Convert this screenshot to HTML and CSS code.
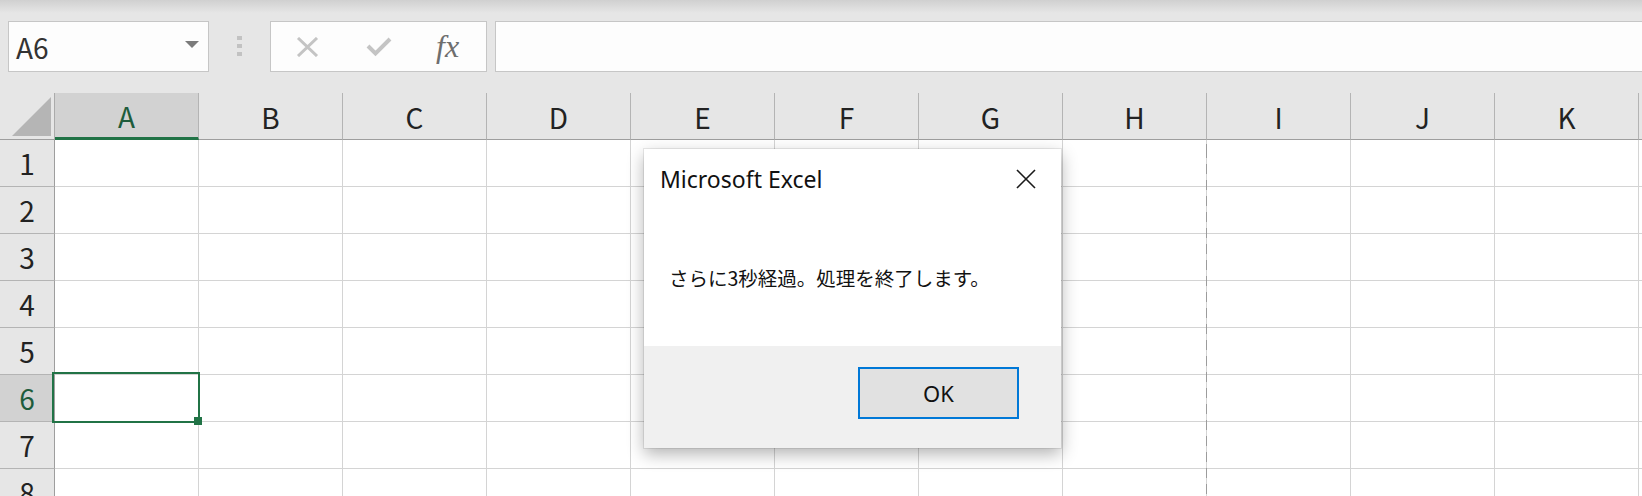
FILE: index.html
```html
<!DOCTYPE html>
<html lang="ja">
<head>
  <meta charset="UTF-8">
  <meta name="viewport" content="width=device-width, initial-scale=1.0">
  <title>Microsoft Excel</title>
  <link rel="stylesheet" href="styles.css">
</head>
<body>
  <div class="formula-bar">
    <div class="name-box">
      <span class="cell-ref">A6</span>
      <span class="drop-arrow"></span>
    </div>
    <div class="grip"><i></i><i></i><i></i></div>
    <div class="fx-buttons">
      <svg class="btn-cancel" width="23" height="20" viewBox="0 0 23 20">
        <path d="M2 1 L21 19 M21 1 L2 19" stroke="#c4c4c4" stroke-width="3" fill="none"/>
      </svg>
      <svg class="btn-enter" width="26" height="21" viewBox="0 0 26 21">
        <path d="M2 10 L9.5 17.5 L24 3" stroke="#c4c4c4" stroke-width="4" fill="none"/>
      </svg>
      <span class="fx">fx</span>
    </div>
    <div class="formula-input"></div>
  </div>

  <div class="sheet">
    <div class="grid" id="grid"></div>
    <div class="page-break"></div>

    <div class="msgbox">
      <div class="msg-body">
        <div class="msg-head">
          <span class="msg-title">Microsoft Excel</span>
          <svg class="msg-close" width="20" height="20" viewBox="0 0 20 20">
            <path d="M1 1 L19 19 M19 1 L1 19" stroke="#1a1a1a" stroke-width="1.6" fill="none"/>
          </svg>
        </div>
        <div class="msg-text">さらに3秒経過。処理を終了します。</div>
      </div>
      <div class="msg-foot">
        <button type="button" class="ok-btn">OK</button>
      </div>
    </div>
  </div>

  <script>
    // columns A..K are labelled, the last one only peeks in at the edge
    var cols = 'ABCDEFGHIJK'.split('');
    var html = '<div class="corner"></div>';

    cols.forEach(function(c, i) {
      html += '<div class="col-head' + (i === 0 ? ' selected' : '') + '">' + c + '</div>';
    });
    html += '<div class="col-head"></div>';

    for (var r = 1; r <= 8; r++) {
      html += '<div class="row-head' + (r === 6 ? ' selected' : '') + '">' + r + '</div>';
      for (var c = 0; c <= cols.length; c++) {
        // A6 is the active cell
        var active = (r === 6 && c === 0) ? ' active' : '';
        html += '<div class="cell' + active + '"></div>';
      }
    }

    document.getElementById('grid').innerHTML = html;
  </script>
</body>
</html>
```

FILE: styles.css
```css
* {
  box-sizing: border-box;
}

body, html {
  margin: 0;
  padding: 0;
  height: 100%;
  overflow: hidden;
  background-color: #e6e6e6;
  font-family: "Noto Sans CJK JP", "Noto Sans", sans-serif;
}

/* formula bar */
.formula-bar {
  height: 93px;
  padding: 21px 0 0 8px;
  display: flex;
  align-items: flex-start;
  background: linear-gradient(#d0d0d0, #e6e6e6 13px);
}

.name-box {
  width: 201px;
  height: 51px;
  padding: 0 9px 0 7px;
  display: flex;
  align-items: center;
  justify-content: space-between;
  background-color: #fdfdfd;
  border: 1px solid #c6c6c6;
}

.cell-ref {
  font-size: 28px;
  line-height: 1;
  color: #333;
}

.drop-arrow {
  width: 0;
  height: 0;
  margin-top: -4px;
  border-left: 7px solid transparent;
  border-right: 7px solid transparent;
  border-top: 7px solid #7b7b7b;
}

.grip {
  margin: 15px 0 0 28px;
  display: flex;
  flex-direction: column;
  gap: 4px;
}

.grip i {
  display: block;
  width: 5px;
  height: 4px;
  background-color: #c2c2c2;
}

.fx-buttons {
  width: 217px;
  height: 51px;
  margin-left: 28px;
  padding-left: 25px;
  display: flex;
  align-items: center;
  background-color: #fdfdfd;
  border: 1px solid #c6c6c6;
}

.btn-enter {
  margin-left: 47px;
}

.fx {
  margin-left: 44px;
  margin-top: -2px;
  font-family: "Liberation Serif", serif;
  font-style: italic;
  font-size: 32px;
  line-height: 1;
  color: #6e6e6e;
}

.formula-input {
  flex: 1;
  height: 51px;
  margin: 0 -2px 0 8px;
  background-color: #fdfdfd;
  border: 1px solid #c6c6c6;
}

/* worksheet */
.sheet {
  position: relative;
  height: calc(100% - 93px);
  overflow: hidden;
}

.grid {
  display: grid;
  grid-template-columns: 55px repeat(12, 144px);
  grid-auto-rows: 47px;
  background-color: #fff;
}

.corner, .col-head, .row-head {
  display: flex;
  align-items: center;
  justify-content: center;
  background-color: #e6e6e6;
  font-size: 28px;
  line-height: 1;
  color: #222;
}

.corner {
  position: relative;
  border-right: 1px solid #ababab;
  border-bottom: 1px solid #9e9e9e;
}

.corner::after {
  content: "";
  position: absolute;
  left: 12px;
  top: 4px;
  width: 39px;
  height: 39px;
  background-color: #b5b5b5;
  clip-path: polygon(100% 0, 100% 100%, 0 100%);
}

.col-head {
  padding-top: 2px;
  border-right: 1px solid #b4b4b4;
  border-bottom: 1px solid #9e9e9e;
}

.row-head {
  border-right: 1px solid #9e9e9e;
  border-bottom: 1px solid #b4b4b4;
}

.col-head.selected {
  background-color: #d2d2d2;
  border-bottom: 3px solid #217346;
  color: #1e5c3c;
}

.row-head.selected {
  background-color: #d2d2d2;
  color: #1e5c3c;
}

.cell {
  border-right: 1px solid #d4d4d4;
  border-bottom: 1px solid #d4d4d4;
}

.cell.active {
  position: relative;
  z-index: 1;
}

.cell.active::before {
  content: "";
  position: absolute;
  left: -3px;
  top: -3px;
  right: -2px;
  bottom: -2px;
  border: 2px solid #217346;
}

.cell.active::after {
  content: "";
  position: absolute;
  right: -4px;
  bottom: -4px;
  width: 8px;
  height: 8px;
  background-color: #217346;
}

/* page break guide between H and I */
.page-break {
  position: absolute;
  left: 1206px;
  top: 47px;
  bottom: 0;
  width: 1px;
  background: repeating-linear-gradient(to bottom, #9c9c9c 0 10px, transparent 10px 16px);
  background-position: 0 8px;
}

/* message box */
.msgbox {
  position: absolute;
  left: 644px;
  top: 56px;
  width: 417px;
  height: 299px;
  display: flex;
  flex-direction: column;
  background-color: #f0f0f0;
  box-shadow: 0 0 0 1px rgba(0, 0, 0, 0.08), 0 6px 16px rgba(0, 0, 0, 0.3);
}

.msg-body {
  height: 197px;
  display: flex;
  flex-direction: column;
  background-color: #fff;
}

.msg-head {
  height: 60px;
  padding: 0 25px 0 16px;
  display: flex;
  align-items: center;
  justify-content: space-between;
}

.msg-title {
  font-family: "Noto Sans", sans-serif;
  font-size: 23px;
  color: #111;
}

.msg-text {
  flex: 1;
  padding-left: 25px;
  display: flex;
  align-items: center;
  font-size: 19.5px;
  color: #111;
}

.msg-foot {
  flex: 1;
  padding: 21px 42px 0 0;
  display: flex;
  justify-content: flex-end;
  align-items: flex-start;
}

.ok-btn {
  width: 161px;
  height: 52px;
  padding: 0;
  background-color: #e1e1e1;
  border: 2px solid #0078d7;
  font-family: "Noto Sans", sans-serif;
  font-size: 22px;
  color: #111;
}
```
